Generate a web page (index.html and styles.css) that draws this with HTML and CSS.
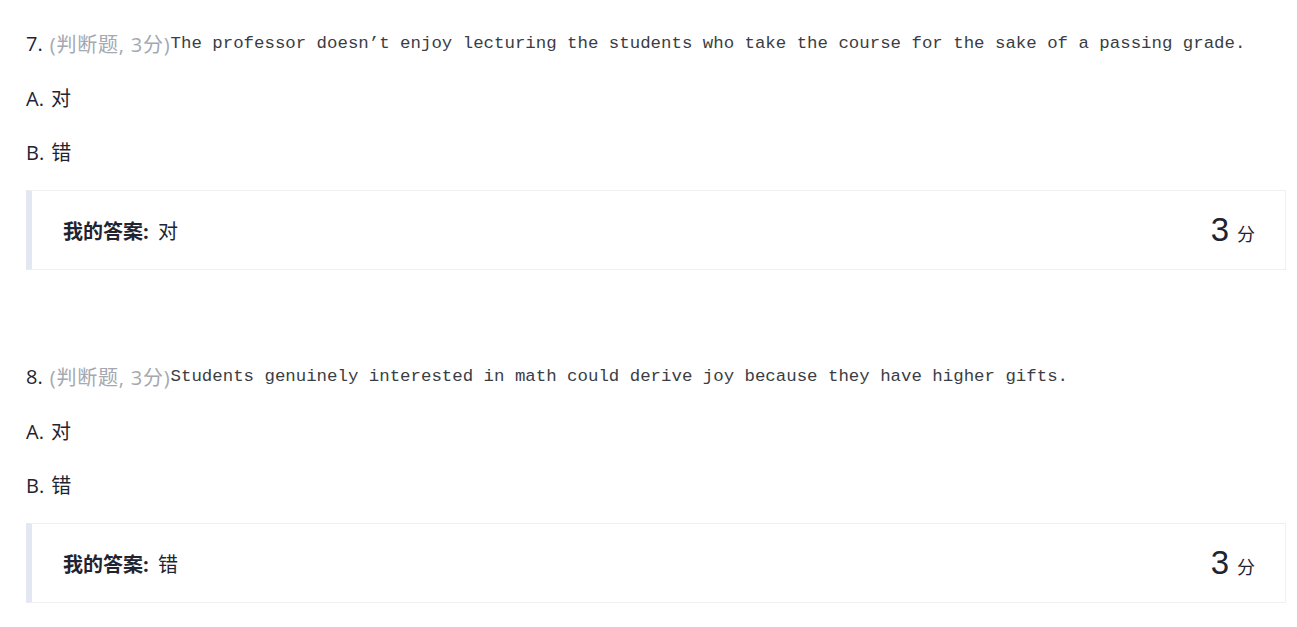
FILE: index.html
```html
<!DOCTYPE html>
<html lang="zh-CN">
<head>
<meta charset="utf-8">
<title>题目</title>
<link rel="stylesheet" href="styles.css">
</head>
<body>
<div class="page">
  <section class="question">
    <div class="q-line"><span class="q-num">7.</span> <span class="q-type">(判断题, 3分)</span><span class="q-text">The professor doesn’t enjoy lecturing the students who take the course for the sake of a passing grade.</span></div>
    <div class="option">A. 对</div>
    <div class="option">B. 错</div>
    <div class="answer-box">
      <div class="my-answer"><strong>我的答案:</strong> 对</div>
      <div class="score"><span class="score-num">3</span> <span class="score-unit">分</span></div>
    </div>
  </section>
  <section class="question">
    <div class="q-line"><span class="q-num">8.</span> <span class="q-type">(判断题, 3分)</span><span class="q-text">Students genuinely interested in math could derive joy because they have higher gifts.</span></div>
    <div class="option">A. 对</div>
    <div class="option">B. 错</div>
    <div class="answer-box">
      <div class="my-answer"><strong>我的答案:</strong> 错</div>
      <div class="score"><span class="score-num">3</span> <span class="score-unit">分</span></div>
    </div>
  </section>
</div>
</body>
</html>
```
FILE: styles.css
```css
html, body {
  margin: 0;
  padding: 0;
  background: #ffffff;
}
body {
  font-family: "Open Sans", "Noto Sans CJK SC", sans-serif;
  color: #1f2430;
}
.page {
  padding: 16px 11px 0 26px;
}
.question {
  display: flex;
  flex-direction: column;
}
.question + .question {
  margin-top: 79px;
}
.q-line {
  height: 54px;
  display: flex;
  align-items: center;
  font-size: 20px;
  white-space: nowrap;
}
.q-num {
  color: #1f2430;
  margin-right: 7px;
}
.q-type {
  color: #a4a8b0;
  letter-spacing: 0.8px;
}
.q-text {
  font-family: "Liberation Mono", monospace;
  font-size: 17.4px;
  color: #3a3d44;
}
.option {
  height: 54px;
  display: flex;
  align-items: center;
  font-size: 20px;
  color: #1f2430;
  word-spacing: 2px;
}
.answer-box {
  margin-top: 12px;
  height: 80px;
  box-sizing: border-box;
  border: 1px solid #f0f0f2;
  border-left: 6px solid #e3e7f1;
  display: flex;
  align-items: center;
  justify-content: space-between;
  padding: 0 30px 0 31px;
}
.my-answer {
  font-size: 20px;
  color: #1f2430;
  word-spacing: 4px;
}
.my-answer strong {
  font-weight: 700;
  word-spacing: 0;
}
.score {
  display: flex;
  align-items: baseline;
}
.score-num {
  font-family: "Liberation Sans", sans-serif;
  font-size: 33px;
  color: #1f2430;
  margin-right: 8px;
}
.score-unit {
  font-size: 18px;
  color: #1f2430;
}
```
